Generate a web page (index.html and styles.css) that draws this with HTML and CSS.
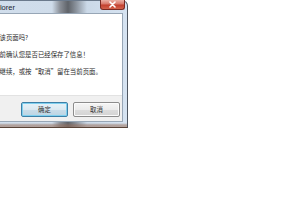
FILE: index.html
```html
<!DOCTYPE html>
<html lang="zh-CN">
<head>
<meta charset="utf-8">
<title>Windows Internet Explorer</title>
<link rel="stylesheet" href="styles.css">
</head>
<body>
<div class="window">
  <div class="titlebar">
    <span class="title">Windows Internet Explorer</span>
    <span class="close">
      <svg width="9" height="7" viewBox="0 0 9 7"><path d="M2 1 L7 6 M7 1 L2 6" stroke="#fff" stroke-width="1.6" stroke-linecap="round"/></svg>
    </span>
  </div>
  <div class="client">
    <div class="message">
      <p class="line">确定离开该页面吗?</p>
      <p class="line">请在离开前确认您是否已经保存了信息！</p>
      <p class="line">点击确定继续，或按“取消”留在当前页面。</p>
    </div>
    <div class="footer">
      <button class="btn btn-default">确定</button>
      <button class="btn">取消</button>
    </div>
  </div>
</div>
</body>
</html>
```
FILE: styles.css
```css
html, body {
  margin: 0;
  padding: 0;
  background: #ffffff;
}
body {
  width: 300px;
  height: 200px;
  overflow: hidden;
  font-family: "Noto Sans CJK SC", "Liberation Sans", sans-serif;
}
.window {
  margin-left: -79px;
  width: 207px;
  height: 128px;
  box-sizing: border-box;
  padding: 0 4px 4px;
  border: 1px solid #6b7a8c;
  border-right-color: #4d5560;
  border-bottom-color: #5a4438;
  border-radius: 6px 6px 0 0;
  background:
    linear-gradient(to bottom, rgba(255,255,255,0) 0, rgba(255,255,255,0) 122px, rgba(150,110,90,0.55) 124px),
    linear-gradient(to right, #d3e0ee 0, #cfdcea 130px, #8b9098 138px, #5f6369 146px, #8a929c 154px, #cbd9e8 165px, #d6e3f1 100%);
}
.titlebar {
  height: 12px;
  display: flex;
  align-items: flex-start;
}
.title {
  font-family: "Liberation Sans", sans-serif;
  font-size: 7.5px;
  line-height: 12px;
  padding-left: 1px;
  padding-top: 1px;
  color: #1b2430;
  white-space: nowrap;
}
.close {
  margin-left: auto;
  margin-right: -2px;
  margin-top: -1px;
  width: 25px;
  height: 10px;
  box-sizing: border-box;
  border: 1px solid #7a2a22;
  border-top: none;
  border-radius: 0 0 3px 3px;
  background: linear-gradient(to bottom, #eab1a6 0, #d9786a 45%, #c2402f 55%, #d3624c 100%);
  display: flex;
  align-items: center;
  justify-content: center;
}
.close svg {
  display: block;
}
.client {
  height: 109px;
  box-sizing: border-box;
  border: 1px solid #97a6b6;
  background: #ffffff;
  display: flex;
  flex-direction: column;
}
.message {
  flex: 1;
  padding: 15px 0 0 47px;
}
.line {
  margin: 0;
  font-size: 6.4px;
  line-height: 17px;
  color: #2a2a2a;
  white-space: nowrap;
}
.footer {
  height: 26px;
  box-sizing: border-box;
  background: #f0f0f0;
  border-top: 1px solid #e2e2e2;
  padding: 6px 2px 0 0;
  display: flex;
  justify-content: flex-end;
  align-items: flex-start;
  gap: 5px;
}
.btn {
  width: 47px;
  height: 15px;
  margin: 0;
  padding: 0;
  box-sizing: border-box;
  border: 1px solid #8c8c8c;
  border-radius: 2px;
  background: linear-gradient(to bottom, #f5f5f5 0, #ebebeb 50%, #dddddd 51%, #d3d3d3 100%);
  font-family: "Noto Sans CJK SC", sans-serif;
  font-size: 6.4px;
  line-height: 13px;
  color: #333333;
  box-shadow: inset 0 0 0 1px #fbfbfb;
}
.btn-default {
  border-color: #3d7fa6;
  background: linear-gradient(to bottom, #e7f2f8 0, #dbe9f1 50%, #c9dde9 51%, #bcd4e3 100%);
  box-shadow: inset 0 0 0 1px #7fd0ef;
}
```
